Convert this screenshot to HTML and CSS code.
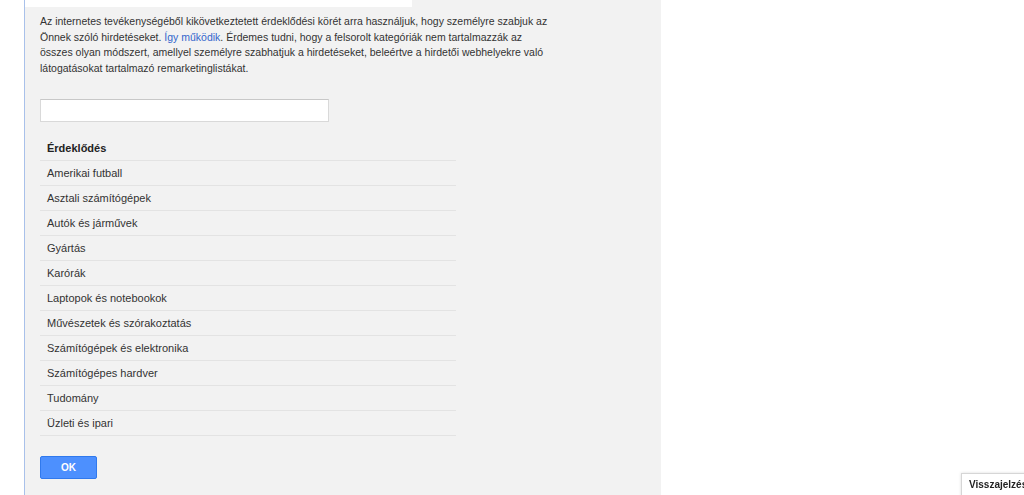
FILE: index.html
```html
<!doctype html>
<html>
  <head>
    <meta charset=utf-8>
    <title>Hirdetési beállítások</title>
    <link rel="stylesheet" href="styles.css">
  </head>
  <body>
    <div class=page>
      <div class=gutter></div>
      <div class=panel>
        <div class=panel-top></div>
        <div class=panel-body>
          <p class=intro>Az internetes tevékenységéből kikövetkeztetett érdeklődési körét arra használjuk, hogy személyre szabjuk az Önnek szóló hirdetéseket. <a href="#">Így működik</a>. Érdemes tudni, hogy a felsorolt kategóriák nem tartalmazzák az összes olyan módszert, amellyel személyre szabhatjuk a hirdetéseket, beleértve a hirdetői webhelyekre való látogatásokat tartalmazó remarketinglistákat.</p>

          <input class=search type=text>

          <ul class=interests>
            <li class=head>Érdeklődés</li>
            <li>Amerikai futball</li>
            <li>Asztali számítógépek</li>
            <li>Autók és járművek</li>
            <li>Gyártás</li>
            <li>Karórák</li>
            <li>Laptopok és notebookok</li>
            <li>Művészetek és szórakoztatás</li>
            <li>Számítógépek és elektronika</li>
            <li>Számítógépes hardver</li>
            <li>Tudomány</li>
            <li>Üzleti és ipari</li>
          </ul>

          <button class=ok>OK</button>
        </div>
      </div>
    </div>

    <div class=feedback>Visszajelzés küldése</div>
  </body>
</html>
```

FILE: styles.css
```css
html, body {
  margin: 0;
  padding: 0;
  background: #fff;
  height: 100%;
  overflow: hidden;
}

body {
  font-family: 'Liberation Sans', Arial, sans-serif;
  font-size: 11px;
  color: #333;
}

.page {
  display: flex;
  height: 495px;
}

.gutter { width: 24px }

.panel {
  width: 636px;
  background: #f2f2f2;
  border-left: 1px solid #a9c1ea;
}

.panel-top {
  width: 387px;
  height: 7px;
  background: #fff;
}

.panel-body { padding: 7px 0 0 15px }

.intro {
  margin: 0;
  width: 512px;
  font-size: 10.5px;
  line-height: 15.5px;
  color: #333;
}
.intro a {
  color: #3366cc;
  text-decoration: none;
}

.search {
  display: block;
  box-sizing: border-box;
  width: 289px;
  height: 23px;
  margin: 23px 0 0;
  border: 1px solid #d9d9d9;
  border-top-color: #c8c8c8;
  background: #fff;
  outline: 0;
}

.interests {
  list-style: none;
  margin: 14px 0 0;
  padding: 0;
  width: 416px;
}
.interests li {
  box-sizing: border-box;
  height: 25px;
  line-height: 25px;
  padding-left: 7px;
  border-bottom: 1px solid #e3e3e3;
  color: #333;
}
.interests li.head {
  font-weight: bold;
  color: #222;
}

.ok {
  display: block;
  width: 57px;
  height: 23px;
  margin-top: 20px;
  padding: 0;
  border: 1px solid #3079ed;
  border-radius: 2px;
  background: #4d90fe;
  color: #fff;
  font-family: inherit;
  font-size: 10px;
  font-weight: bold;
}

.feedback {
  position: fixed;
  left: 961px;
  top: 473px;
  width: 120px;
  height: 24px;
  box-sizing: border-box;
  padding: 5px 0 0 7px;
  background: #fff;
  border: 1px solid #d6d6d6;
  box-shadow: 0 0 3px #0002;
  font-weight: bold;
  font-size: 10px;
  color: #222;
  white-space: nowrap;
}
```
